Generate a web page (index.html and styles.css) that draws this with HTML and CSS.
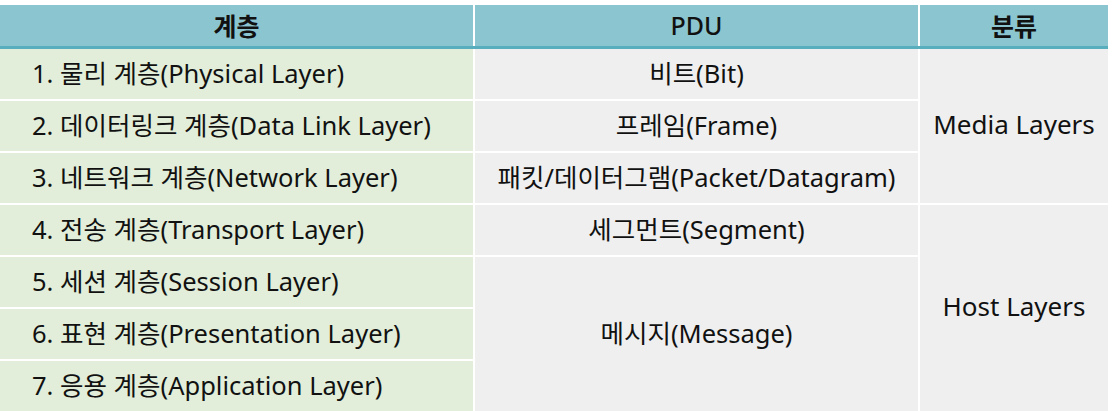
FILE: index.html
```html
<!DOCTYPE html>
<html lang="ko">
<head>
<meta charset="utf-8">
<link rel="stylesheet" href="styles.css">
</head>
<body>
<div class="table">
  <div class="head">
    <div class="hcell bold">계층</div>
    <div class="hcell">PDU</div>
    <div class="hcell bold">분류</div>
  </div>
  <div class="body">
    <div class="layer r1">1. 물리 계층(Physical Layer)</div>
    <div class="layer r2">2. 데이터링크 계층(Data Link Layer)</div>
    <div class="layer r3">3. 네트워크 계층(Network Layer)</div>
    <div class="layer r4">4. 전송 계층(Transport Layer)</div>
    <div class="layer r5">5. 세션 계층(Session Layer)</div>
    <div class="layer r6">6. 표현 계층(Presentation Layer)</div>
    <div class="layer r7">7. 응용 계층(Application Layer)</div>

    <div class="pdu r1">비트(Bit)</div>
    <div class="pdu r2">프레임(Frame)</div>
    <div class="pdu r3">패킷/데이터그램(Packet/Datagram)</div>
    <div class="pdu r4">세그먼트(Segment)</div>
    <div class="pdu r5-7">메시지(Message)</div>

    <div class="cls r1-3">Media Layers</div>
    <div class="cls r4-7">Host Layers</div>
  </div>
</div>
</body>
</html>
```
FILE: styles.css
```css
html, body {
  margin: 0;
  padding: 0;
  background: #ffffff;
}
body {
  padding-top: 5px;
  font-family: "Noto Sans", "Noto Sans CJK KR", sans-serif;
  font-size: 25.5px;
  color: #111111;
}
.table {
  width: 1108px;
}
.head {
  display: grid;
  grid-template-columns: 473px 443px 188px;
  column-gap: 2px;
  height: 41px;
  border-bottom: 3px solid #58aebd;
}
.hcell {
  background: #8bc5cf;
  display: flex;
  align-items: center;
  justify-content: center;
  font-size: 25px;
  font-weight: 500;
  padding-bottom: 2px;
}
.hcell.bold {
  font-weight: 700;
}
.body {
  display: grid;
  grid-template-columns: 473px 443px 188px;
  grid-template-rows: repeat(7, 50px);
  gap: 2px;
}
.layer,
.pdu,
.cls {
  display: flex;
  align-items: center;
  padding-bottom: 5px;
  box-sizing: border-box;
}
.layer {
  grid-column: 1;
  background: #e2eed9;
  padding-left: 32px;
}
.pdu {
  grid-column: 2;
  background: #efefef;
  justify-content: center;
}
.cls {
  grid-column: 3;
  background: #efefef;
  justify-content: center;
  font-size: 26px;
}
.r1 { grid-row: 1; }
.r2 { grid-row: 2; }
.r3 { grid-row: 3; }
.r4 { grid-row: 4; }
.r5 { grid-row: 5; }
.r6 { grid-row: 6; }
.r7 { grid-row: 7; }
.r5-7 { grid-row: 5 / 8; }
.r1-3 { grid-row: 1 / 4; }
.r4-7 { grid-row: 4 / 8; }
```
